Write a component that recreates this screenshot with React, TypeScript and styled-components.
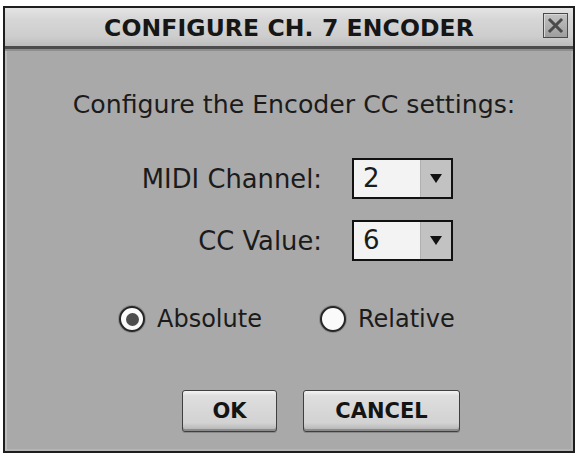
import React from "react";
import styled, { createGlobalStyle } from "styled-components";

const GlobalStyle = createGlobalStyle`
  html, body {
    margin: 0;
    padding: 0;
    background: #ffffff;
  }
  body {
    font-family: "DejaVu Sans", Verdana, sans-serif;
    color: #1b1b1b;
  }
`;

const Page = styled.div`
  width: 578px;
  height: 456px;
  box-sizing: border-box;
  padding: 6px 3px 3px 3px;
`;

const Dialog = styled.div`
  width: 572px;
  height: 447px;
  box-sizing: border-box;
  border: 2px solid #1e1e1e;
  background: #a9a9a9;
  box-shadow: inset 2px 0 0 #bdbdbd, inset -2px -2px 0 #b4b4b4;
  display: flex;
  flex-direction: column;
`;

const TitleBar = styled.div`
  height: 38px;
  display: grid;
  grid-template-columns: 1fr auto 1fr;
  align-items: center;
  background: linear-gradient(
    #e4e4e4 0%,
    #d6d6d6 30%,
    #cdcdcd 75%,
    #bdbdbd 100%
  );
  border-bottom: 3px solid #4c4c4c;
  box-shadow: 0 2px 0 #8e8e8e;
`;

const Title = styled.div`
  grid-column: 2;
  font-size: 23.5px;
  font-weight: bold;
  color: #161616;
  letter-spacing: 0.1px;
  padding-top: 2px;
`;

const CloseButton = styled.button`
  grid-column: 3;
  justify-self: end;
  align-self: start;
  margin: 5px 5px 0 0;
  width: 25px;
  height: 25px;
  padding: 0;
  box-sizing: border-box;
  border: 1px solid #4a4a4a;
  background: linear-gradient(#c2c2c2, #9e9e9e);
  box-shadow: inset 1px 1px 0 #d8d8d8;
  display: flex;
  align-items: center;
  justify-content: center;
`;

const Body = styled.div`
  flex: 1;
  display: flex;
  flex-direction: column;
  padding-top: 41px;
`;

const Heading = styled.div`
  font-size: 25.2px;
  line-height: 30px;
  text-align: center;
  padding-left: 10px;
`;

const Form = styled.div`
  margin-top: 38px;
  display: grid;
  grid-template-columns: 317px 101px;
  column-gap: 30px;
  row-gap: 21px;
  align-items: center;
`;

const Label = styled.div`
  justify-self: end;
  font-size: 25.8px;
  line-height: 30px;
`;

const Select = styled.div`
  width: 101px;
  height: 41px;
  box-sizing: border-box;
  border: 2px solid #111;
  display: flex;
  background: #f3f3f3;
`;

const SelectValue = styled.div`
  flex: 1;
  padding-left: 9px;
  font-size: 26px;
  line-height: 37px;
`;

const SelectArrow = styled.div`
  width: 30px;
  background: #c2c2c2;
  border-left: 1px solid #b0b0b0;
  display: flex;
  align-items: center;
  justify-content: center;
`;

const RadioRow = styled.div`
  margin-top: 43px;
  padding-left: 114px;
  display: flex;
  align-items: center;
  gap: 58px;
`;

const RadioOption = styled.label`
  display: flex;
  align-items: center;
  gap: 12px;
  font-size: 24px;
  line-height: 30px;
`;

const RadioCircle = styled.span<{ $checked?: boolean }>`
  width: 26px;
  height: 26px;
  box-sizing: border-box;
  border-radius: 50%;
  border: 2px solid #262626;
  background: #fafafa;
  box-shadow: 0 0 0 1px #8c8c8c;
  display: flex;
  align-items: center;
  justify-content: center;
  &::after {
    content: "";
    width: 13px;
    height: 13px;
    border-radius: 50%;
    background: ${(p) => (p.$checked ? "#4d4d4d" : "transparent")};
  }
`;

const ButtonRow = styled.div`
  margin-top: 56px;
  padding-left: 177px;
  display: flex;
  gap: 26px;
`;

const Button = styled.button<{ $width: number }>`
  width: ${(p) => p.$width}px;
  height: 42px;
  box-sizing: border-box;
  border: 1px solid #3f3f3f;
  border-radius: 3px;
  background: linear-gradient(
    #f4f4f4 0%,
    #dedede 12%,
    #d2d2d2 80%,
    #b0b0b0 100%
  );
  box-shadow: inset 0 -2px 0 #8c8c8c, 0 1px 0 #8a8a8a;
  font-family: "DejaVu Sans", Verdana, sans-serif;
  font-size: 21px;
  font-weight: bold;
  color: #141414;
  padding: 0;
`;

const CloseIcon = () => (
  <svg width="17" height="17" viewBox="0 0 17 17">
    <path
      d="M3 3 L14 14 M14 3 L3 14"
      stroke="#4a4a4a"
      strokeWidth="3"
      strokeLinecap="square"
    />
  </svg>
);

const ArrowIcon = () => (
  <svg width="12" height="9" viewBox="0 0 12 9">
    <path d="M0 0 L12 0 L6 9 Z" fill="#111" />
  </svg>
);

export default function App() {
  return (
    <>
      <GlobalStyle />
      <Page>
        <Dialog>
          <TitleBar>
            <Title>CONFIGURE CH. 7 ENCODER</Title>
            <CloseButton aria-label="Close">
              <CloseIcon />
            </CloseButton>
          </TitleBar>
          <Body>
            <Heading>Configure the Encoder CC settings:</Heading>
            <Form>
              <Label>MIDI Channel:</Label>
              <Select>
                <SelectValue>2</SelectValue>
                <SelectArrow>
                  <ArrowIcon />
                </SelectArrow>
              </Select>
              <Label>CC Value:</Label>
              <Select>
                <SelectValue>6</SelectValue>
                <SelectArrow>
                  <ArrowIcon />
                </SelectArrow>
              </Select>
            </Form>
            <RadioRow>
              <RadioOption>
                <RadioCircle $checked />
                Absolute
              </RadioOption>
              <RadioOption>
                <RadioCircle />
                Relative
              </RadioOption>
            </RadioRow>
            <ButtonRow>
              <Button $width={95}>OK</Button>
              <Button $width={157}>CANCEL</Button>
            </ButtonRow>
          </Body>
        </Dialog>
      </Page>
    </>
  );
}
